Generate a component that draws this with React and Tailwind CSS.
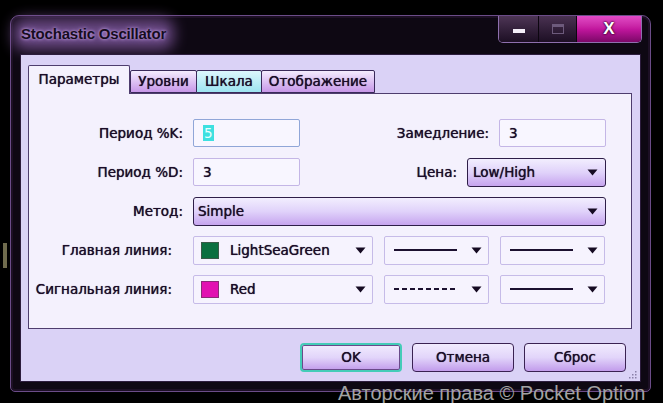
import React from "react";

const Arrow = () => (
  <svg width="11" height="7" viewBox="0 0 11 7" className="shrink-0">
    <path d="M0.5 0.5h10L5.5 6.5z" fill="#150a22" />
  </svg>
);

const Label = ({ children, w = "w-[164px]" }) => (
  <div className={`${w} shrink-0 pr-[10px] text-right whitespace-nowrap`}>{children}</div>
);

const Input = ({ children, focus }) => (
  <div
    className={`w-[107px] h-[28px] shrink-0 rounded-[2px] border bg-[#f8f6ff] flex items-center pl-[9px] ${
      focus ? "border-[#90a6d8]" : "border-[#c4b6e6]"
    }`}
  >
    {children}
  </div>
);

const FlatSelect = ({ w, children }) => (
  <div
    className={`${w} h-[29px] shrink-0 rounded-[2px] border border-[#c6bbe8] bg-[#f6f3fe] flex items-center justify-between pl-[7px] pr-[6px]`}
  >
    <div className="flex items-center">{children}</div>
    <Arrow />
  </div>
);

const Solid = () => <div className="w-[63px] h-[2px] bg-[#1c1030] ml-[2px]" />;
const Dashed = () => (
  <div className="flex gap-[3px] ml-[2px]">
    {[0, 1, 2, 3, 4, 5, 6, 7].map((i) => (
      <div key={i} className="w-[5px] h-[2px] bg-[#1c1030]" />
    ))}
  </div>
);

const Button = ({ children, ok }) => (
  <div
    className={`w-[102px] h-[29px] rounded-[4px] flex items-center justify-center bg-linear-to-b from-[#f1ebfe] via-[#e2d5fa] to-[#c29ceb] ${
      ok ? "border-2 border-[#44ccb8] shadow-[inset_0_0_0_1px_#6a4a8a]" : "border border-[#3a2252]"
    }`}
  >
    {children}
  </div>
);

export default function App() {
  return (
    <div className="relative w-[663px] h-[403px] overflow-hidden bg-black font-['DejaVu_Sans',sans-serif] text-[13.5px] text-[#1a0c28] [text-shadow:0_0_0.7px_#1a0c28]">
      <div className="absolute left-[3px] top-[243px] w-[4px] h-[25px] bg-[#706c4e]" />
      <div className="pt-[15px] pl-[10px]">
        <div className="w-[641px] h-[377px] rounded-t-[9px] rounded-b-[5px] border border-[#6b4c88] bg-[#0e0813] flex flex-col shadow-[inset_0_0_0_2px_#1c0f24]">
          {/* title bar */}
          <div className="h-[38px] shrink-0 flex items-start justify-between">
            <div className="relative ml-[6px] mt-[6px] px-[4px] py-[2px] leading-[20px]">
              <div className="absolute -inset-[4px] rounded-[12px] bg-[#7b5498] blur-[7px] opacity-80" />
              <div className="relative font-['Liberation_Sans',sans-serif] font-bold text-[15px] tracking-[-0.2px] text-[#160c1e] [text-shadow:0_0_3px_#c8a6ea,0_0_6px_#a880d0]">
                Stochastic Oscillator
              </div>
            </div>
            <div className="mr-[8px] flex h-[27px] rounded-b-[5px] border border-t-0 border-[#8e6fae] overflow-hidden">
              <div className="w-[40px] h-full bg-linear-to-b from-[#4e3656] to-[#1d0f24] flex items-end justify-center pb-[9px] border-r border-[#0c0610]">
                <div className="w-[12px] h-[4px] bg-[#f4eef8]" />
              </div>
              <div className="w-[38px] h-full bg-linear-to-b from-[#4a3252] to-[#1d0f24] flex items-center justify-center border-r border-[#0c0610]">
                <div className="w-[12px] h-[10px] border border-t-[3px] border-[#6d5a7c]" />
              </div>
              <div className="w-[64px] h-full bg-linear-to-b from-[#e24ac6] via-[#c2169e] to-[#7c0868] flex items-center justify-center font-['Liberation_Sans',sans-serif] font-bold text-[17px] text-white [text-shadow:0_0_2px_#2a0022,0_0_2px_#2a0022]">
                X
              </div>
            </div>
          </div>

          {/* client area */}
          <div className="relative mx-[9px] mb-[9px] flex-1 border border-[#2c1c3c] bg-[#dad2f6] pt-[10px] px-[7px] flex flex-col">
            {/* tabs */}
            <div className="h-[28px] flex items-end">
              <div className="relative z-10 w-[102px] h-[29px] -mb-[1px] rounded-t-[2px] border border-b-0 border-[#4e3d6e] bg-[#f4f1fd] flex items-center justify-center pb-[1px]">
                Параметры
              </div>
              <div className="w-[67px] h-[23px] rounded-t-[2px] border border-[#3a2a5a] bg-linear-to-b from-[#f3ecfd] to-[#c797e8] flex items-center justify-center">
                Уровни
              </div>
              <div className="w-[66px] h-[23px] -ml-[1px] rounded-t-[2px] border border-[#3a2a5a] bg-linear-to-b from-[#dcf7fc] to-[#9de4f1] flex items-center justify-center">
                Шкала
              </div>
              <div className="w-[114px] h-[23px] -ml-[1px] rounded-t-[2px] border border-[#3a2a5a] bg-linear-to-b from-[#f3ecfd] to-[#c797e8] flex items-center justify-center">
                Отображение
              </div>
            </div>

            {/* panel */}
            <div className="w-[604px] h-[236px] border border-[#4e3d6e] bg-[#f4f1fd] pt-[25px] pr-[25px] flex flex-col gap-[11px]">
              <div className="h-[28px] flex items-center">
                <Label>Период %K:</Label>
                <Input focus>
                  <span className="bg-[#3ee0e0] text-[#eaffff] px-[1px] leading-[16px] [text-shadow:none]">5</span>
                </Input>
                <div className="flex-1" />
                <Label w="">Замедление:</Label>
                <Input>3</Input>
              </div>
              <div className="h-[28px] flex items-center">
                <Label>Период %D:</Label>
                <Input>3</Input>
                <div className="flex-1" />
                <Label w="">Цена:</Label>
                <div className="w-[139px] h-[29px] rounded-[3px] border-[1.5px] border-[#2e1e48] bg-linear-to-b from-[#f2eefe] via-[#e0d2fa] to-[#c6a4ee] flex items-center justify-between pl-[5px] pr-[7px]">
                  <span>Low/High</span>
                  <Arrow />
                </div>
              </div>
              <div className="h-[28px] flex items-center">
                <Label>Метод:</Label>
                <div className="flex-1 h-[29px] rounded-[3px] border-[1.5px] border-[#2e1e48] bg-linear-to-b from-[#f2eefe] via-[#e0d2fa] to-[#c6a4ee] flex items-center justify-between pl-[4px] pr-[7px]">
                  <span>Simple</span>
                  <Arrow />
                </div>
              </div>
              <div className="h-[28px] flex items-center gap-[11px]">
                <Label w="w-[153px]">Главная линия:</Label>
                <FlatSelect w="w-[180px]">
                  <div className="w-[18px] h-[17px] bg-[#0b7040] border border-[#3a5a48]" />
                  <span className="ml-[11px]">LightSeaGreen</span>
                </FlatSelect>
                <FlatSelect w="w-[105px]">
                  <Solid />
                </FlatSelect>
                <FlatSelect w="w-[105px]">
                  <Solid />
                </FlatSelect>
              </div>
              <div className="h-[28px] flex items-center gap-[11px]">
                <Label w="w-[153px]">Сигнальная линия:</Label>
                <FlatSelect w="w-[180px]">
                  <div className="w-[18px] h-[17px] bg-[#e210b2] border border-[#8a2a78]" />
                  <span className="ml-[11px]">Red</span>
                </FlatSelect>
                <FlatSelect w="w-[105px]">
                  <Dashed />
                </FlatSelect>
                <FlatSelect w="w-[105px]">
                  <Solid />
                </FlatSelect>
              </div>
            </div>

            {/* buttons */}
            <div className="mt-[14px] pr-[7px] flex justify-end gap-[10px]">
              <Button ok>OK</Button>
              <Button>Отмена</Button>
              <Button>Сброс</Button>
            </div>

            {/* grip */}
            <svg className="absolute right-[3px] bottom-[2px]" width="10" height="10" viewBox="0 0 10 10">
              {[
                [8, 2],
                [8, 5],
                [5, 5],
                [8, 8],
                [5, 8],
                [2, 8],
              ].map(([x, y], i) => (
                <rect key={i} x={x} y={y} width="1.5" height="1.5" fill="#8a80a8" />
              ))}
            </svg>
          </div>
        </div>
      </div>
      <div className="absolute left-[338px] top-[383px] leading-[20px] font-['Liberation_Sans',sans-serif] text-[20px] text-[#a3a3a3] whitespace-nowrap [text-shadow:none]">
        Авторские права © Pocket Option
      </div>
    </div>
  );
}
